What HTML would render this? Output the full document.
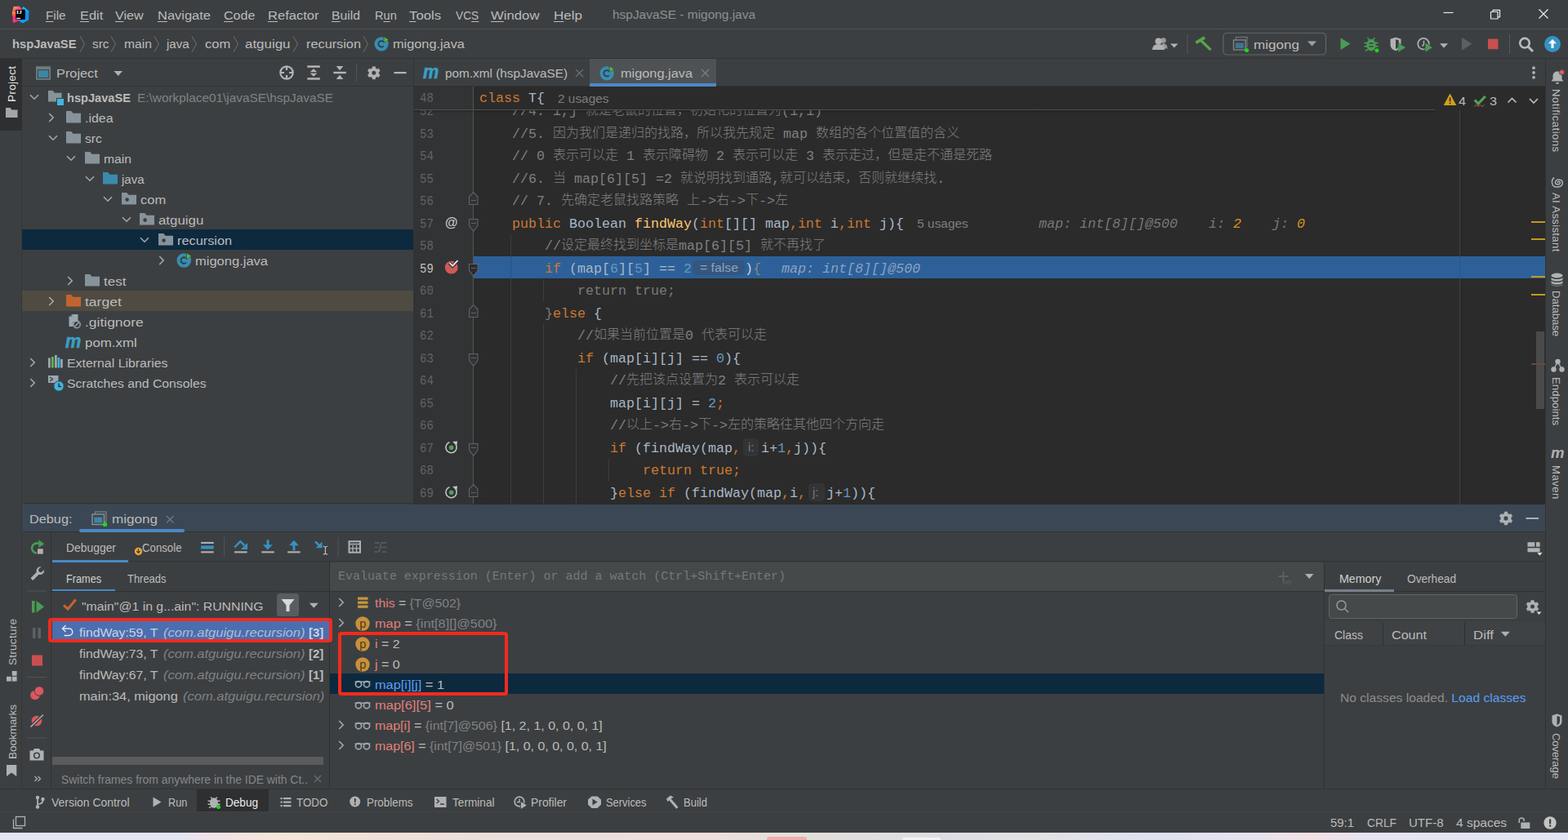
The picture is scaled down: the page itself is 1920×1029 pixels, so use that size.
<!DOCTYPE html>
<html lang="zh"><head><meta charset="utf-8"><title>hspJavaSE - migong.java</title>
<style>
html,body{margin:0;padding:0;}
body{width:1920px;height:1029px;overflow:hidden;background:#3c3f41;position:relative;font-family:"Liberation Sans", "Noto Sans CJK SC", sans-serif;color:#bbbbbb;}
#root{position:absolute;left:0;top:0;width:1920px;height:1029px;overflow:hidden;}
#root div,#root svg,#root span.t{position:absolute;}
span.t{white-space:pre;line-height:24px;transform-origin:0 50%;font-size:15.2px;}
.s{font-family:"Liberation Sans", "Noto Sans CJK SC", sans-serif;}
.r{font-family:"Liberation Serif",serif;}
span.t.m{font-family:"Liberation Mono", "Noto Sans CJK SC", monospace;font-size:16.67px;}
span.t .c{font-size:16px;font-weight:300;position:relative;top:-1px;}
.d{color:#7a7a7a;}.b1{color:#7a7a7a;}.k{color:#cc7832;}.n{color:#6897bb;}.g{color:#808080;}.f{color:#ffc66d;}
u{text-decoration-thickness:1px;text-underline-offset:1.5px;}
</style></head>
<body><div id="root">
<div style="left:0px;top:0px;width:1920px;height:1029px;background:#3c3f41;"></div>
<div style="left:0px;top:35px;width:1920px;height:1px;background:#4f5153;"></div>
<div style="left:0px;top:71px;width:1920px;height:1px;background:#323232;"></div>
<div style="left:0px;top:72px;width:27px;height:895px;background:#3c3f41;"></div>
<div style="left:0px;top:72px;width:27px;height:88px;background:#2d2f30;"></div>
<div style="left:26px;top:160px;width:1px;height:807px;background:#35383a;"></div>
<div style="left:27px;top:105px;width:480px;height:1px;background:#323232;"></div>
<div style="left:506px;top:72px;width:1px;height:34px;background:#323232;"></div>
<div style="left:507px;top:72px;width:1385px;height:34px;background:#3c3f41;"></div>
<div style="left:722px;top:72px;width:155px;height:34px;background:#4e5254;"></div>
<div style="left:722px;top:102px;width:155px;height:4px;background:#4a88c7;"></div>
<div style="left:507px;top:105px;width:1385px;height:1px;background:#323232;"></div>
<div style="left:507px;top:106px;width:1385px;height:512px;background:#2b2b2b;"></div>
<div style="left:506px;top:106px;width:73px;height:512px;background:#313335;"></div>
<div style="left:579px;top:106px;width:1px;height:511px;background:#555555;"></div>
<div style="left:1892px;top:72px;width:28px;height:895px;background:#3c3f41;"></div>
<div style="left:1892px;top:72px;width:1px;height:895px;background:#323232;"></div>
<div style="left:27px;top:617.5px;width:1865px;height:34px;background:#3b4754;"></div>
<div style="left:28px;top:616px;width:479px;height:1px;background:#323232;"></div>
<div style="left:28px;top:651px;width:1864px;height:1px;background:#323232;"></div>
<div style="left:0px;top:966px;width:1920px;height:1px;background:#323232;"></div>
<div style="left:0px;top:1019.6px;width:1920px;height:9.4px;background:linear-gradient(90deg,#e4e6f4 0%,#e4e6f4 11.5%,#f2e1e8 13.5%,#f6e5da 17%,#f1e2d9 22%,#e9deda 33%,#eddfdd 45%,#e2dfdb 52%,#dddde4 60%,#e3e2e3 66%,#dfe2ef 73%,#e6e3ee 80%,#f5e1e4 83.5%,#e6e4f0 87%,#e2e5f3 100%);"></div>
<div style="left:939px;top:1025px;width:49px;height:6px;background:#efb0ae;border-radius:5px;"></div>
<div style="left:1105px;top:1026px;width:47px;height:6px;background:#f4f4f6;border-radius:5px;"></div>
<svg style="left:14px;top:7px;" width="23" height="22" viewBox="0 0 23 22">
<defs>
<linearGradient id="lg1" x1="0" y1="0" x2="1" y2="1"><stop offset="0" stop-color="#ffc533"/><stop offset=".45" stop-color="#ff4f8a"/><stop offset="1" stop-color="#ff1f74"/></linearGradient>
<linearGradient id="lg2" x1="0" y1="0" x2="0" y2="1"><stop offset="0" stop-color="#00d4ff"/><stop offset=".4" stop-color="#1590ff"/><stop offset="1" stop-color="#00a8ff"/></linearGradient>
<linearGradient id="lg3" x1="0" y1="0" x2="0" y2="1"><stop offset="0" stop-color="#f0c020"/><stop offset=".5" stop-color="#ff6a1a"/><stop offset="1" stop-color="#ff3a7a"/></linearGradient>
</defs>
<polygon points="2.800,1 10,0.800 13.500,5.500 6,6 1,9.500 0.800,8" fill="url(#lg1)"/>
<polygon points="0.800,8.500 6,7 6,14 1,12.500" fill="url(#lg3)"/>
<polygon points="1.500,12 6,13 11,17.500 2,21.200" fill="#ff3287"/>
<polygon points="12.800,3.800 14.500,1 21.500,6.500 21,17.500 13.500,21.500 8.500,18 17,16.500 17,5" fill="url(#lg2)"/>
<rect x="5.200" y="5.100" width="11.700" height="11.700" fill="#0a0508"/>
<rect x="6.200" y="14.900" width="4.800" height="1.200" fill="#f4f4f4"/>
</svg>
<span class="t r" style="left:20.3px;top:11.4px;font-size:6.6px;line-height:8px;color:#ffffff;font-weight:bold;transform:scaleX(1.1234);">IJ</span>
<span class="t s" style="left:56.2px;top:6.7px;transform:scaleX(1.0047);"><u>F</u>ile</span>
<span class="t s" style="left:97.5px;top:6.7px;transform:scaleX(1.0807);"><u>E</u>dit</span>
<span class="t s" style="left:141.2px;top:6.7px;transform:scaleX(1.0595);"><u>V</u>iew</span>
<span class="t s" style="left:192.5px;top:6.7px;transform:scaleX(1.0842);"><u>N</u>avigate</span>
<span class="t s" style="left:274.2px;top:6.7px;transform:scaleX(1.0547);"><u>C</u>ode</span>
<span class="t s" style="left:327.5px;top:6.7px;transform:scaleX(1.0887);"><u>R</u>efactor</span>
<span class="t s" style="left:406.3px;top:6.7px;transform:scaleX(1.0356);"><u>B</u>uild</span>
<span class="t s" style="left:458.7px;top:6.7px;transform:scaleX(0.9614);">R<u>u</u>n</span>
<span class="t s" style="left:501.3px;top:6.7px;transform:scaleX(1.1052);"><u>T</u>ools</span>
<span class="t s" style="left:558px;top:6.7px;transform:scaleX(0.9056);">VC<u>S</u></span>
<span class="t s" style="left:601px;top:6.7px;transform:scaleX(1.1012);"><u>W</u>indow</span>
<span class="t s" style="left:677.5px;top:6.7px;transform:scaleX(1.12);"><u>H</u>elp</span>
<span class="t s" style="left:749.5px;top:6.4px;color:#8d8f90;transform:scaleX(1.0161);">hspJavaSE - migong.java</span>
<svg style="left:1760px;top:5px;" width="150" height="26" viewBox="0 0 150 26">
<path d="M7.5 10.5h12" stroke="#e8e8e8" stroke-width="1.2" fill="none"/>
<path d="M65.5 9.5h8.5v8.5h-8.5z M68 9.5v-2.2h8.5v8.5h-2.5" stroke="#e8e8e8" stroke-width="1.2" fill="none" stroke-linejoin="round"/>
<path d="M124.5 6.5l11 11M135.5 6.5l-11 11" stroke="#e8e8e8" stroke-width="1.3" fill="none"/>
</svg>
<span class="t s" style="left:15.3px;top:42.2px;font-weight:bold;transform:scaleX(0.9684);">hspJavaSE</span>
<span class="t s" style="left:113.3px;top:42.2px;transform:scaleX(1.0123);">src</span>
<span class="t s" style="left:151.7px;top:42.2px;transform:scaleX(1.0267);">main</span>
<span class="t s" style="left:204px;top:42.2px;transform:scaleX(0.9937);">java</span>
<span class="t s" style="left:250.5px;top:42.2px;transform:scaleX(1.087);">com</span>
<span class="t s" style="left:300px;top:42.2px;transform:scaleX(1.1138);">atguigu</span>
<span class="t s" style="left:374.7px;top:42.2px;transform:scaleX(1.0725);">recursion</span>
<span class="t s" style="left:480.8px;top:42.2px;transform:scaleX(1.0732);">migong.java</span>
<svg style="left:0px;top:36px;" width="600" height="36" viewBox="0 36 600 36"><path d="M98 44.5l5.5 9.5l-5.5 9.5" stroke="#6e7173" stroke-width="1" fill="none"/><path d="M136 44.5l5.5 9.5l-5.5 9.5" stroke="#6e7173" stroke-width="1" fill="none"/><path d="M189 44.5l5.5 9.5l-5.5 9.5" stroke="#6e7173" stroke-width="1" fill="none"/><path d="M235 44.5l5.5 9.5l-5.5 9.5" stroke="#6e7173" stroke-width="1" fill="none"/><path d="M286 44.5l5.5 9.5l-5.5 9.5" stroke="#6e7173" stroke-width="1" fill="none"/><path d="M359 44.5l5.5 9.5l-5.5 9.5" stroke="#6e7173" stroke-width="1" fill="none"/><path d="M445 44.5l5.5 9.5l-5.5 9.5" stroke="#6e7173" stroke-width="1" fill="none"/></svg>
<svg style="left:457.5px;top:44.3px;" width="18.6" height="18.6" viewBox="-0.5 -1 18.6 18.6"><circle cx="8.6" cy="8.8" r="8.600" fill="#3a8cb0"/><path d="M11.300 11.300a3.700 3.700 0 1 1 0-5" fill="none" stroke="#27424e" stroke-width="1.800"/><path d="M11.2 -0.8l6.6 4.4-6.600 4.400z" fill="#3c3f41"/><path d="M12 0.300l5.200 3.400-5.200 3.400z" fill="#59b340"/></svg>
<svg style="left:1400px;top:36px;" width="520" height="36" viewBox="0 0 520 36">
<g fill="#afb1b3">
 <circle cx="24.5" cy="13.500" r="3.300" opacity=".8"/><path d="M22.500 17.500c4-1 7 1 7 6h-5z" opacity=".8"/>
 <circle cx="18.500" cy="14.500" r="4"/><path d="M11 25c0-5.500 3.500-6.800 7.500-6.800s7.500 1.300 7.500 6.800z"/>
 <path d="M33 17.500h9.500l-4.750 5z"/>
</g>
<rect x="53.500" y="6" width="1" height="24" fill="#555759"/>
<g fill="#57a64a">
 <rect x="63.500" y="11.200" width="12.500" height="3.800" transform="rotate(-31 69.800 13)"/>
 <rect x="68" y="17.600" width="17" height="3.300" transform="rotate(44 76.500 19.200)"/>
</g>
<rect x="98" y="4.500" width="125.500" height="26.500" rx="4" fill="none" stroke="#626466" stroke-width="1.200"/>
<g>
 <rect x="113.500" y="9.500" width="13.500" height="12" fill="none" stroke="#6f7578" stroke-width="1.200"/>
 <rect x="110.500" y="13" width="14.500" height="12" fill="#3c3f41" stroke="#7d8386" stroke-width="1.400"/>
 <rect x="112.800" y="16.500" width="10" height="6.500" fill="#41758f"/>
 <circle cx="126.500" cy="25.500" r="2.600" fill="#24d324"/>
</g>
<path d="M201 14.500h11l-5.500 6z" fill="#9da0a2"/>
<g transform="translate(0,1.200)">
<path d="M241.500 9.400l12 7.150-12 7.150z" fill="#499c54"/>
<g fill="#499c54">
 <ellipse cx="279" cy="18" rx="5.600" ry="7.200"/>
 <path d="M275 8.500l2.300 2.500h3.400l2.300-2.500 1.100 1-2.500 2.800h-5.200l-2.500-2.800z"/>
 <path d="M270.500 14.500h4v1.700h-4zM283.500 14.500h4v1.700h-4zM270.500 18.800h4v1.700h-4zM283.500 18.800h4v1.700h-4zM271.500 24.300l3.300-1.800.8 1.400-3.300 1.800zM286.500 24.300l-3.300-1.800-.8 1.400 3.300 1.800z"/>
</g>
<rect x="276.300" y="15" width="5.400" height="1.500" fill="#3c3f41"/><rect x="276.300" y="19" width="5.400" height="1.500" fill="#3c3f41"/>
<circle cx="286" cy="24.500" r="2.700" fill="#24d324" stroke="#3c3f41" stroke-width=".6"/>
<path d="M302.500 10.500l6.500-2 6.500 2v7c0 4-3 6.500-6.500 7.500-3.500-1-6.500-3.500-6.500-7.500z" fill="#afb1b3"/>
<path d="M309 11v12c2-1 3.800-3 3.800-5.500v-5.500z" fill="#3c3f41"/>
<path d="M312 15l9.500 6-9.500 6z" fill="#499c54" stroke="#3c3f41" stroke-width=".6"/>
<circle cx="343" cy="16.500" r="6.800" fill="none" stroke="#afb1b3" stroke-width="1.700"/>
<path d="M343.500 12.500v4.500l-2 2.500" fill="none" stroke="#afb1b3" stroke-width="1.500"/>
<path d="M345 15l9.500 6-9.500 6z" fill="#499c54" stroke="#3c3f41" stroke-width=".8"/>
<path d="M363 16h10l-5 5.500z" fill="#afb1b3"/>
<path d="M390 8.500l12.500 8-12.500 8z" fill="#5c5e60"/>
<rect x="422" y="10.500" width="12.500" height="12.500" fill="#c94f4f"/>
</g>
<rect x="448" y="6" width="1" height="24" fill="#555759"/>
<circle cx="467" cy="16.700" r="5.800" fill="none" stroke="#b9bbbd" stroke-width="2.600"/>
<path d="M471 21l6 6" stroke="#b9bbbd" stroke-width="3" fill="none"/>
<circle cx="501" cy="18" r="10" fill="#3592c4"/>
<path d="M501 12l-5 5.200h3.500v5.800h3v-5.800h3.500z" fill="#fff"/>
</svg>
<span class="t s" style="left:1534.5px;top:42.9px;transform:scaleX(1.1242);">migong</span>
<span class="t s" style="left:5.3px;top:124.8px;transform-origin:0 0;font-size:13.6px;line-height:20px;color:#e4e4e4;letter-spacing:0.281px;transform:rotate(-90deg);">Project</span>
<svg style="left:7px;top:132px;" width="15" height="12" viewBox="0 0 15 12"><path d="M0 0h5.500l2 2.500h7v9.500h-14.500z" fill="#a4a6a8"/></svg>
<span class="t s" style="left:5.6px;top:814.7px;transform-origin:0 0;font-size:13.6px;line-height:20px;letter-spacing:0.23px;transform:rotate(-90deg);">Structure</span>
<svg style="left:8px;top:822px;" width="13" height="13" viewBox="0 0 13 13"><rect x="6.800" y="0" width="5.800" height="5.800" fill="#afb1b3"/><rect x="0" y="6.800" width="5.800" height="5.800" fill="#afb1b3"/><rect x="6.800" y="6.800" width="5.800" height="5.800" fill="#afb1b3"/></svg>
<span class="t s" style="left:5.6px;top:930px;transform-origin:0 0;font-size:13.6px;line-height:20px;letter-spacing:-0.125px;transform:rotate(-90deg);">Bookmarks</span>
<svg style="left:8px;top:936.5px;" width="13" height="15" viewBox="0 0 13 15"><path d="M0 0h12.300v14l-6.150-4.500-6.150 4.500z" fill="#afb1b3"/></svg>
<svg style="left:43px;top:80px;" width="20" height="19" viewBox="0 0 20 19"><rect x="1" y="1.200" width="18" height="16.600" fill="#6f7a80"/><rect x="2.800" y="5.200" width="14.400" height="10.800" fill="#3c3f41"/><rect x="3.700" y="6.200" width="12.600" height="8.900" fill="#3e86a0"/></svg>
<span class="t s" style="left:68.7px;top:78.4px;transform:scaleX(1.0744);">Project</span>
<svg style="left:139px;top:86px;" width="12" height="8" viewBox="0 0 12 8"><path d="M0.500 1h10.500l-5.250 6z" fill="#afb1b3"/></svg>
<svg style="left:340px;top:78px;" width="160" height="22" viewBox="0 0 160 22">
<g fill="none" stroke="#b2b4b6" stroke-width="2.200">
 <circle cx="11" cy="11" r="7.700"/>
 <path d="M11 3v5M11 14v5M3 11h5M14 11h5"/>
</g>
<g fill="#b2b4b6">
 <rect x="36.300" y="2.300" width="15.500" height="2.500"/><rect x="36.300" y="17.200" width="15.500" height="2.500"/>
 <path d="M44 6.200l4.300 4.100h-8.600zM44 15.800l4.300-4.100h-8.600z"/>
 <rect x="68.300" y="9.800" width="15.500" height="2.400"/>
 <path d="M76 8.300l4.300-5.200h-8.600zM76 13.700l4.300 5.200h-8.600z"/>
</g>
<rect x="96" y="-1" width="1" height="24" fill="#515355"/>
<path fill-rule="evenodd" fill="#b2b4b6" stroke="#b2b4b6" stroke-width="0.6" stroke-linejoin="round" d="M116.0 5.6L116.2 3.7L119.4 3.7L119.6 5.6L121.8 6.9L123.6 6.1L125.2 8.9L123.6 10.0L123.6 12.6L125.2 13.7L123.6 16.5L121.8 15.7L119.6 17.0L119.4 18.9L116.2 18.9L116.0 17.0L113.8 15.7L112.0 16.5L110.4 13.7L112.0 12.6L112.0 10.0L110.4 8.9L112.0 6.1L113.8 6.9ZM115.0 11.3a2.808 2.808 0 1 0 5.616 0a2.808 2.808 0 1 0 -5.616 0Z"/>
<rect x="142.500" y="10" width="15" height="2.200" fill="#b2b4b6"/>
</svg>
<div style="left:27px;top:281px;width:479px;height:25px;background:#0d293e;"></div>
<div style="left:27px;top:356px;width:479px;height:25px;background:#4f4b41;"></div>
<svg style="left:36px;top:115.0px;" width="12" height="8" viewBox="0 0 12 8"><path d="M1 1.200l5 5 5-5" fill="none" stroke="#a5a7a9" stroke-width="1.600"/></svg>
<svg style="left:59.0px;top:111.3px;" width="16.5" height="13.5" viewBox="0 0 18 14.5"><path d="M0 0h6.200l2.300 2.800h9.500v11.700h-18z" fill="#87939a"/></svg>
<div style="left:69.3px;top:120.1px;width:7.6px;height:8.1px;background:#40b6e0;border:1px solid #3c3f41;box-sizing:content-box;"></div>
<span class="t s" style="left:81.7px;top:107.9px;font-weight:bold;transform:scaleX(0.961);">hspJavaSE</span>
<span class="t s" style="left:168.3px;top:107.9px;color:#808284;transform:scaleX(1.0117);">E:\workplace01\javaSE\hspJavaSE</span>
<svg style="left:59.3px;top:137.5px;" width="8" height="12" viewBox="0 0 8 12"><path d="M1.200 1l5 5-5 5" fill="none" stroke="#a5a7a9" stroke-width="1.600"/></svg>
<svg style="left:81px;top:136.0px;" width="18" height="14.5" viewBox="0 0 18 14.5"><path d="M0 0h6.200l2.300 2.800h9.500v11.700h-18z" fill="#87939a"/></svg>
<span class="t s" style="left:104.2px;top:132.9px;transform:scaleX(1.0505);">.idea</span>
<svg style="left:58.5px;top:165.0px;" width="12" height="8" viewBox="0 0 12 8"><path d="M1 1.200l5 5 5-5" fill="none" stroke="#a5a7a9" stroke-width="1.600"/></svg>
<svg style="left:81px;top:161.0px;" width="18" height="14.5" viewBox="0 0 18 14.5"><path d="M0 0h6.200l2.300 2.800h9.500v11.700h-18z" fill="#87939a"/></svg>
<span class="t s" style="left:104.2px;top:157.9px;transform:scaleX(1.0272);">src</span>
<svg style="left:81px;top:190.0px;" width="12" height="8" viewBox="0 0 12 8"><path d="M1 1.200l5 5 5-5" fill="none" stroke="#a5a7a9" stroke-width="1.600"/></svg>
<svg style="left:103.8px;top:186.0px;" width="18" height="14.5" viewBox="0 0 18 14.5"><path d="M0 0h6.200l2.300 2.800h9.500v11.700h-18z" fill="#87939a"/></svg>
<span class="t s" style="left:126.5px;top:182.9px;transform:scaleX(1.0327);">main</span>
<svg style="left:103.5px;top:215.0px;" width="12" height="8" viewBox="0 0 12 8"><path d="M1 1.200l5 5 5-5" fill="none" stroke="#a5a7a9" stroke-width="1.600"/></svg>
<svg style="left:126.2px;top:211.0px;" width="18" height="14.5" viewBox="0 0 18 14.5"><path d="M0 0h6.200l2.300 2.800h9.500v11.700h-18z" fill="#3a8bab"/></svg>
<span class="t s" style="left:149px;top:207.9px;transform:scaleX(0.9901);">java</span>
<svg style="left:126px;top:240.0px;" width="12" height="8" viewBox="0 0 12 8"><path d="M1 1.200l5 5 5-5" fill="none" stroke="#a5a7a9" stroke-width="1.600"/></svg>
<svg style="left:148.8px;top:236.0px;" width="18" height="14.5" viewBox="0 0 18 14.5"><path d="M0 0h6.200l2.300 2.800h9.500v11.700h-18z" fill="#87939a"/><circle cx="6.6" cy="8.6" r="2.3" fill="#3c3f41"/></svg>
<span class="t s" style="left:171.6px;top:232.9px;transform:scaleX(1.0835);">com</span>
<svg style="left:148.5px;top:265.0px;" width="12" height="8" viewBox="0 0 12 8"><path d="M1 1.200l5 5 5-5" fill="none" stroke="#a5a7a9" stroke-width="1.600"/></svg>
<svg style="left:171.2px;top:261.0px;" width="18" height="14.5" viewBox="0 0 18 14.5"><path d="M0 0h6.200l2.300 2.800h9.500v11.700h-18z" fill="#87939a"/><circle cx="6.6" cy="8.6" r="2.3" fill="#3c3f41"/></svg>
<span class="t s" style="left:194.4px;top:257.9px;transform:scaleX(1.1098);">atguigu</span>
<svg style="left:171px;top:290.0px;" width="12" height="8" viewBox="0 0 12 8"><path d="M1 1.200l5 5 5-5" fill="none" stroke="#a5a7a9" stroke-width="1.600"/></svg>
<svg style="left:193.8px;top:286.0px;" width="18" height="14.5" viewBox="0 0 18 14.5"><path d="M0 0h6.200l2.300 2.800h9.500v11.700h-18z" fill="#87939a"/><circle cx="6.6" cy="8.6" r="2.3" fill="#3c3f41"/></svg>
<span class="t s" style="left:216.5px;top:282.9px;transform:scaleX(1.0741);">recursion</span>
<svg style="left:194.3px;top:312.5px;" width="8" height="12" viewBox="0 0 8 12"><path d="M1.200 1l5 5-5 5" fill="none" stroke="#a5a7a9" stroke-width="1.600"/></svg>
<svg style="left:215.9px;top:309.1px;" width="19" height="19" viewBox="-0.5 -1 18.6 18.6"><circle cx="8.6" cy="8.8" r="8.600" fill="#3a8cb0"/><path d="M11.300 11.300a3.700 3.700 0 1 1 0-5" fill="none" stroke="#27424e" stroke-width="1.800"/><path d="M11.2 -0.8l6.6 4.4-6.600 4.400z" fill="#3c3f41"/><path d="M12 0.300l5.200 3.400-5.200 3.400z" fill="#59b340"/></svg>
<span class="t s" style="left:239px;top:307.9px;transform:scaleX(1.0866);">migong.java</span>
<svg style="left:81.8px;top:337.5px;" width="8" height="12" viewBox="0 0 8 12"><path d="M1.200 1l5 5-5 5" fill="none" stroke="#a5a7a9" stroke-width="1.600"/></svg>
<svg style="left:103.8px;top:336.0px;" width="18" height="14.5" viewBox="0 0 18 14.5"><path d="M0 0h6.200l2.300 2.800h9.500v11.700h-18z" fill="#87939a"/></svg>
<span class="t s" style="left:126.5px;top:332.9px;transform:scaleX(1.1232);">test</span>
<svg style="left:59.3px;top:362.5px;" width="8" height="12" viewBox="0 0 8 12"><path d="M1.200 1l5 5-5 5" fill="none" stroke="#a5a7a9" stroke-width="1.600"/></svg>
<svg style="left:81px;top:361.0px;" width="18" height="14.5" viewBox="0 0 18 14.5"><path d="M0 0h6.200l2.300 2.800h9.500v11.700h-18z" fill="#c2642f"/></svg>
<span class="t s" style="left:104.2px;top:357.9px;transform:scaleX(1.1533);">target</span>
<svg style="left:82px;top:384.5px;" width="18" height="18" viewBox="0 0 18 18"><path d="M2.500 3l4-3h7v9h-11z" fill="#9aa7b0"/><path d="M2.500 3h4v-3z" fill="#3c3f41" opacity=".5"/><rect x="2.500" y="9" width="5" height="6" fill="#9aa7b0"/><circle cx="12" cy="12.500" r="4.200" fill="#3c3f41" stroke="#9aa7b0" stroke-width="1.400"/><path d="M9.500 15l5-5" stroke="#9aa7b0" stroke-width="1.400"/></svg>
<span class="t s" style="left:104.2px;top:382.9px;transform:scaleX(1.1491);">.gitignore</span>
<span class="t s" style="left:80.3px;top:405.5px;font-size:23px;color:#3a9fc4;font-weight:bold;font-style:italic;transform:scaleX(0.9436);-webkit-text-stroke:0.6px #3a9fc4;">m</span>
<span class="t s" style="left:104.2px;top:407.9px;transform:scaleX(1.1117);">pom.xml</span>
<svg style="left:36.3px;top:437.5px;" width="8" height="12" viewBox="0 0 8 12"><path d="M1.200 1l5 5-5 5" fill="none" stroke="#a5a7a9" stroke-width="1.600"/></svg>
<svg style="left:59px;top:435.0px;" width="18" height="17" viewBox="0 0 18 17"><rect x="0" y="3.500" width="2.800" height="12" fill="#9aa7b0"/><rect x="4" y="2" width="2.800" height="13.500" fill="#62b543"/><rect x="8" y="0" width="2.800" height="15.500" fill="#9aa7b0"/><rect x="11.600" y="3" width="2.600" height="12.500" fill="#40b6e0"/><rect x="15" y="5" width="2.800" height="10.500" fill="#9aa7b0"/></svg>
<span class="t s" style="left:81.5px;top:432.9px;transform:scaleX(1.0449);">External Libraries</span>
<svg style="left:36.3px;top:462.5px;" width="8" height="12" viewBox="0 0 8 12"><path d="M1.200 1l5 5-5 5" fill="none" stroke="#a5a7a9" stroke-width="1.600"/></svg>
<svg style="left:59px;top:458.5px;" width="20" height="21" viewBox="0 0 20 21"><path d="M0 1h12.500v9h-12.500z" fill="#9aa7b0"/><path d="M2 3l3.500 2.500-3.500 2.500" stroke="#3c3f41" stroke-width="1.300" fill="none"/><circle cx="13" cy="14" r="6.200" fill="#40b6e0" stroke="#3c3f41" stroke-width="1"/><path d="M13 10.500v4h3" stroke="#2b2b2b" stroke-width="1.400" fill="none"/></svg>
<span class="t s" style="left:81.5px;top:457.9px;transform:scaleX(1.0357);">Scratches and Consoles</span>
<span class="t s" style="left:518.3px;top:75.8px;font-size:23px;color:#3a9fc4;font-weight:bold;font-style:italic;transform:scaleX(0.9436);-webkit-text-stroke:0.6px #3a9fc4;">m</span>
<span class="t s" style="left:544.5px;top:78.4px;transform:scaleX(1.0098);">pom.xml (hspJavaSE)</span>
<svg style="left:704px;top:84px;" width="11" height="11" viewBox="0 0 11 11"><path d="M1 1l9 9M10 1l-9 9" stroke="#6e7072" stroke-width="1.200" fill="none"/></svg>
<svg style="left:733.7px;top:80px;" width="18.6" height="18.6" viewBox="-0.5 -1 18.6 18.6"><circle cx="8.6" cy="8.8" r="8.600" fill="#3a8cb0"/><path d="M11.300 11.300a3.700 3.700 0 1 1 0-5" fill="none" stroke="#27424e" stroke-width="1.800"/><path d="M11.2 -0.8l6.6 4.4-6.600 4.400z" fill="#3c3f41"/><path d="M12 0.300l5.200 3.400-5.200 3.400z" fill="#59b340"/></svg>
<span class="t s" style="left:759.5px;top:78.4px;transform:scaleX(1.0744);">migong.java</span>
<svg style="left:858px;top:84px;" width="11" height="11" viewBox="0 0 11 11"><path d="M1 1l9 9M10 1l-9 9" stroke="#7d7f81" stroke-width="1.200" fill="none"/></svg>
<svg style="left:1874px;top:80px;" width="8" height="18" viewBox="0 0 8 18"><circle cx="4" cy="3.200" r="1.900" fill="#afb1b3"/><circle cx="4" cy="9" r="1.900" fill="#afb1b3"/><circle cx="4" cy="14.800" r="1.900" fill="#afb1b3"/></svg>
<div style="left:580px;top:314px;width:1312px;height:27px;background:#2d6099;"></div>
<div style="left:1787px;top:135px;width:1px;height:483px;background:#424242;"></div>
<div style="left:1787px;top:314.25px;width:1px;height:27.5px;background:#2a5588;"></div>
<div style="left:625px;top:286.75px;width:1px;height:330.25px;background:#3d3d3d;"></div>
<div style="left:625px;top:314.25px;width:1px;height:27.5px;background:#25517f;"></div>
<div style="left:665px;top:341.75px;width:1px;height:27.5px;background:#3d3d3d;"></div>
<div style="left:665px;top:396.75px;width:1px;height:220.25px;background:#3d3d3d;"></div>
<div style="left:705px;top:451.75px;width:1px;height:165.25px;background:#3d3d3d;"></div>
<div style="left:745px;top:561.75px;width:1px;height:27.5px;background:#3d3d3d;"></div>
<div style="left:580px;top:135px;width:1300px;height:20px;overflow:hidden;"><span class="t m" style="left:47px;top:-11.75px;line-height:27.5px;color:#a9b7c6;"><span class="g">//4. i,j <span class="c">就是老鼠的位置，初始化的位置为</span>(1,1)</span></span></div>
<div style="left:507px;top:135px;width:70px;height:20px;overflow:hidden;"><span class="t m" style="left:6.6px;top:-11.75px;line-height:27.5px;color:#606366;transform:scaleX(.84);">52</span></div>
<span class="t m" style="left:627px;top:150.75px;line-height:27.5px;color:#a9b7c6;"><span class="g">//5. <span class="c">因为我们是递归的找路，所以我先规定</span> map <span class="c">数组的各个位置值的含义</span></span></span>
<span class="t m" style="left:513.6px;top:150.75px;line-height:27.5px;color:#606366;transform:scaleX(0.84);">53</span>
<span class="t m" style="left:627px;top:178.25px;line-height:27.5px;color:#a9b7c6;"><span class="g">// 0 <span class="c">表示可以走</span> 1 <span class="c">表示障碍物</span> 2 <span class="c">表示可以走</span> 3 <span class="c">表示走过，但是走不通是死路</span></span></span>
<span class="t m" style="left:513.6px;top:178.25px;line-height:27.5px;color:#606366;transform:scaleX(0.84);">54</span>
<span class="t m" style="left:627px;top:205.75px;line-height:27.5px;color:#a9b7c6;"><span class="g">//6. <span class="c">当</span> map[6][5] =2 <span class="c">就说明找到通路</span>,<span class="c">就可以结束，否则就继续找</span>.</span></span>
<span class="t m" style="left:513.6px;top:205.75px;line-height:27.5px;color:#606366;transform:scaleX(0.84);">55</span>
<span class="t m" style="left:627px;top:233.25px;line-height:27.5px;color:#a9b7c6;"><span class="g">// 7. <span class="c">先确定老鼠找路策略</span> <span class="c">上</span>-&gt;<span class="c">右</span>-&gt;<span class="c">下</span>-&gt;<span class="c">左</span></span></span>
<span class="t m" style="left:513.6px;top:233.25px;line-height:27.5px;color:#606366;transform:scaleX(0.84);">56</span>
<span class="t m" style="left:627px;top:260.75px;line-height:27.5px;color:#a9b7c6;"><span class="k">public </span>Boolean <span class="f">findWay</span>(<span class="k">int</span>[][] map<span class="k">,</span><span class="k">int</span> i<span class="k">,</span><span class="k">int</span> j){</span>
<span class="t m" style="left:513.6px;top:260.75px;line-height:27.5px;color:#606366;transform:scaleX(0.84);">57</span>
<span class="t m" style="left:667px;top:288.25px;line-height:27.5px;color:#a9b7c6;"><span class="g">//<span class="c">设定最终找到坐标是</span>map[6][5] <span class="c">就不再找了</span></span></span>
<span class="t m" style="left:513.6px;top:288.25px;line-height:27.5px;color:#606366;transform:scaleX(0.84);">58</span>
<span class="t m" style="left:667px;top:315.75px;line-height:27.5px;color:#a9b7c6;"><span class="k">if</span> (map[<span class="n">6</span>][<span class="n">5</span>] == <span class="n">2</span></span>
<span class="t m" style="left:513.6px;top:315.75px;line-height:27.5px;color:#c0c0c0;transform:scaleX(0.84);">59</span>
<span class="t m" style="left:707px;top:343.25px;line-height:27.5px;color:#a9b7c6;"><span class="d">return true;</span></span>
<span class="t m" style="left:513.6px;top:343.25px;line-height:27.5px;color:#606366;transform:scaleX(0.84);">60</span>
<span class="t m" style="left:667px;top:370.75px;line-height:27.5px;color:#a9b7c6;"><span class="b1">}</span><span class="k">else</span> {</span>
<span class="t m" style="left:513.6px;top:370.75px;line-height:27.5px;color:#606366;transform:scaleX(0.84);">61</span>
<span class="t m" style="left:707px;top:398.25px;line-height:27.5px;color:#a9b7c6;"><span class="g">//<span class="c">如果当前位置是</span>0 <span class="c">代表可以走</span></span></span>
<span class="t m" style="left:513.6px;top:398.25px;line-height:27.5px;color:#606366;transform:scaleX(0.84);">62</span>
<span class="t m" style="left:707px;top:425.75px;line-height:27.5px;color:#a9b7c6;"><span class="k">if</span> (map[i][j] == <span class="n">0</span>){</span>
<span class="t m" style="left:513.6px;top:425.75px;line-height:27.5px;color:#606366;transform:scaleX(0.84);">63</span>
<span class="t m" style="left:747px;top:453.25px;line-height:27.5px;color:#a9b7c6;"><span class="g">//<span class="c">先把该点设置为</span>2 <span class="c">表示可以走</span></span></span>
<span class="t m" style="left:513.6px;top:453.25px;line-height:27.5px;color:#606366;transform:scaleX(0.84);">64</span>
<span class="t m" style="left:747px;top:480.75px;line-height:27.5px;color:#a9b7c6;">map[i][j] = <span class="n">2</span><span class="k">;</span></span>
<span class="t m" style="left:513.6px;top:480.75px;line-height:27.5px;color:#606366;transform:scaleX(0.84);">65</span>
<span class="t m" style="left:747px;top:508.25px;line-height:27.5px;color:#a9b7c6;"><span class="g">//<span class="c">以上</span>-&gt;<span class="c">右</span>-&gt;<span class="c">下</span>-&gt;<span class="c">左的策略往其他四个方向走</span></span></span>
<span class="t m" style="left:513.6px;top:508.25px;line-height:27.5px;color:#606366;transform:scaleX(0.84);">66</span>
<span class="t m" style="left:747px;top:535.75px;line-height:27.5px;color:#a9b7c6;"><span class="k">if</span> (findWay(map<span class="k">,</span></span>
<span class="t m" style="left:513.6px;top:535.75px;line-height:27.5px;color:#606366;transform:scaleX(0.84);">67</span>
<span class="t m" style="left:787px;top:563.25px;line-height:27.5px;color:#a9b7c6;"><span class="k">return true;</span></span>
<span class="t m" style="left:513.6px;top:563.25px;line-height:27.5px;color:#606366;transform:scaleX(0.84);">68</span>
<span class="t m" style="left:747px;top:590.75px;line-height:27.5px;color:#a9b7c6;">}<span class="k">else if</span> (findWay(map<span class="k">,</span>i<span class="k">,</span></span>
<span class="t m" style="left:513.6px;top:590.75px;line-height:27.5px;color:#606366;transform:scaleX(0.84);">69</span>
<span class="t s" style="left:1123px;top:262.4px;color:#7c7e80;transform:scaleX(1.0139);">5 usages</span>
<span class="t m" style="left:1272px;top:260.75px;line-height:27.5px;color:#787878;font-style:italic;">map: int[8][]@500</span>
<span class="t m" style="left:1480px;top:260.75px;line-height:27.5px;color:#787878;font-style:italic;">i: <span style="color:#d98f1f">2</span></span>
<span class="t m" style="left:1558px;top:260.75px;line-height:27.5px;color:#787878;font-style:italic;">j: <span style="color:#d98f1f">0</span></span>
<div style="left:847.5px;top:318.5px;width:64.5px;height:18.5px;background:#34567f;border-radius:5px;"></div>
<span class="t s" style="left:857px;top:316.4px;color:#8da2bd;transform:scaleX(1.0405);">= false</span>
<span class="t m" style="left:912px;top:315.75px;line-height:27.5px;color:#c8d0d8;">)<span style="color:#8a8a78">{</span></span>
<span class="t m" style="left:957px;top:315.75px;line-height:27.5px;color:#8aa3c2;font-style:italic;">map: int[8][]@500</span>
<div style="left:909.5px;top:536.5px;width:19.5px;height:22px;background:#333435;border-radius:4.5px;"></div>
<span class="t s" style="left:916px;top:536.4px;font-size:14.5px;color:#7c7e80;">i:</span>
<span class="t m" style="left:932px;top:535.75px;line-height:27.5px;color:#a9b7c6;">i+<span class="n">1</span><span class="k">,</span>j)){</span>
<div style="left:989.5px;top:591.5px;width:20px;height:22px;background:#333435;border-radius:4.5px;"></div>
<span class="t s" style="left:995px;top:591.4px;font-size:14.5px;color:#7c7e80;">j:</span>
<span class="t m" style="left:1012px;top:590.75px;line-height:27.5px;color:#a9b7c6;">j+<span class="n">1</span>)){</span>
<div style="left:507px;top:106px;width:1385px;height:28px;background:#2b2b2b;"></div>
<div style="left:507px;top:106px;width:72px;height:28px;background:#313335;"></div>
<div style="left:579px;top:106px;width:1px;height:28px;background:#555555;"></div>
<div style="left:507px;top:134px;width:1250px;height:1px;background:#505050;"></div>
<div style="left:507px;top:135px;width:1250px;height:4px;background:linear-gradient(180deg,rgba(0,0,0,.22),rgba(0,0,0,0));"></div>
<span class="t m" style="left:513.6px;top:107.45px;line-height:27.5px;color:#606366;transform:scaleX(0.84);">48</span>
<span class="t m" style="left:587px;top:107.45px;line-height:27.5px;color:#a9b7c6;"><span class="k">class</span> T{</span>
<span class="t s" style="left:682.7px;top:109.1px;color:#7c7e80;transform:scaleX(1.0139);">2 usages</span>
<div style="left:722px;top:102.3px;width:155px;height:3.6px;background:#4a88c7;"></div>
<svg style="left:1766px;top:112px;" width="122" height="22" viewBox="0 0 122 22">
<path d="M9.500 2.500l7.800 14.500h-15.600z" fill="#d2a11a"/>
<rect x="8.700" y="7.500" width="1.700" height="5" fill="#2b2b2b"/><rect x="8.700" y="13.700" width="1.700" height="1.700" fill="#2b2b2b"/>
<path d="M39.800 10.500l4.300 4.500 8.600-9" fill="none" stroke="#4da457" stroke-width="3.200"/>
<path d="M39 18.500l2.500-2 2.500 2 2.500-2 2.500 2 2.500-2" fill="none" stroke="#c75450" stroke-width="1"/>
<path d="M80.500 13.500l5-5 5 5" fill="none" stroke="#bbbbbb" stroke-width="1.700"/>
<path d="M107 9l5 5 5-5" fill="none" stroke="#bbbbbb" stroke-width="1.700"/>
</svg>
<span class="t s" style="left:1786px;top:111.9px;transform:scaleX(1.0647);">4</span>
<span class="t s" style="left:1823.5px;top:111.9px;transform:scaleX(1.0647);">3</span>
<span class="t s" style="left:544.8px;top:260.8px;font-size:16.8px;color:#c6c6c6;font-weight:bold;transform:scaleX(0.9466);">@</span>
<svg style="left:543px;top:316px;" width="22" height="22" viewBox="0 0 22 22"><circle cx="9.700" cy="11.700" r="7.900" fill="#cf5955"/><path d="M7.200 6.200l4 3.700 6.600-6.800" fill="none" stroke="#313335" stroke-width="4"/><path d="M7.500 6.200l3.700 3.500 6.300-6.500" fill="none" stroke="#e8e8e8" stroke-width="1.800"/></svg>
<svg style="left:543px;top:536.5px;" width="20" height="22" viewBox="0 0 20 22"><path d="M15.200 7.700a6.600 6.600 0 1 1-7.800-2.900" fill="none" stroke="#c3c5c7" stroke-width="1.500"/><path d="M11.100 4.100l6-.6-.9 5.700z" fill="#c3c5c7"/><circle cx="9.700" cy="11.300" r="2.800" fill="#4fa05a"/></svg>
<svg style="left:543px;top:591.5px;" width="20" height="22" viewBox="0 0 20 22"><path d="M15.200 7.700a6.600 6.600 0 1 1-7.800-2.900" fill="none" stroke="#c3c5c7" stroke-width="1.500"/><path d="M11.100 4.100l6-.6-.9 5.700z" fill="#c3c5c7"/><circle cx="9.700" cy="11.300" r="2.800" fill="#4fa05a"/></svg>
<svg style="left:573px;top:234.2px;" width="14" height="18" viewBox="0 0 14 18"><path d="M1.500 16.500h10.500v-9.500l-5.250-5.500-5.250 5.500z" fill="#313335" stroke="#606366" stroke-width="1.100"/><path d="M3.800 11.500h6" stroke="#606366" stroke-width="1"/></svg>
<svg style="left:573px;top:267.0px;" width="14" height="18" viewBox="0 0 14 18"><path d="M1.500 1.500h10.500v8l-5.250 6.500-5.250-6.500z" fill="#313335" stroke="#606366" stroke-width="1.100"/><path d="M3.800 6.500h6" stroke="#606366" stroke-width="1"/></svg>
<svg style="left:573px;top:322.0px;" width="14" height="18" viewBox="0 0 14 18"><path d="M1.500 1.500h10.500v8l-5.250 6.500-5.250-6.500z" fill="#2b2b2b" stroke="#606366" stroke-width="1.100"/><path d="M3.800 6.500h6" stroke="#606366" stroke-width="1"/></svg>
<svg style="left:573px;top:371.7px;" width="14" height="18" viewBox="0 0 14 18"><path d="M1.500 16.500h10.500v-9.500l-5.250-5.500-5.250 5.500z" fill="#313335" stroke="#606366" stroke-width="1.100"/><path d="M3.800 11.500h6" stroke="#606366" stroke-width="1"/></svg>
<svg style="left:573px;top:432.0px;" width="14" height="18" viewBox="0 0 14 18"><path d="M1.500 1.500h10.500v8l-5.250 6.500-5.250-6.500z" fill="#313335" stroke="#606366" stroke-width="1.100"/><path d="M3.800 6.500h6" stroke="#606366" stroke-width="1"/></svg>
<svg style="left:573px;top:542.0px;" width="14" height="18" viewBox="0 0 14 18"><path d="M1.500 1.500h10.500v8l-5.250 6.500-5.250-6.500z" fill="#313335" stroke="#606366" stroke-width="1.100"/><path d="M3.800 6.500h6" stroke="#606366" stroke-width="1"/></svg>
<svg style="left:573px;top:591.7px;" width="14" height="18" viewBox="0 0 14 18"><path d="M1.500 16.500h10.500v-9.500l-5.250-5.500-5.250 5.500z" fill="#313335" stroke="#606366" stroke-width="1.100"/><path d="M3.800 11.500h6" stroke="#606366" stroke-width="1"/></svg>
<div style="left:1875px;top:271px;width:17px;height:2px;background:#c29a1e;"></div>
<div style="left:1875px;top:292px;width:17px;height:2px;background:#c29a1e;"></div>
<div style="left:1875px;top:338px;width:17px;height:2px;background:#c29a1e;"></div>
<div style="left:1875px;top:360px;width:17px;height:2px;background:#c29a1e;"></div>
<div style="left:1881px;top:406px;width:10px;height:95px;background:#4a4a4a;"></div>
<div style="left:1875px;top:445px;width:17px;height:2px;background:#6a4a3c;"></div>
<span class="t s" style="left:35.5px;top:624.4px;transform:scaleX(1.0718);">Debug:</span>
<svg style="left:112px;top:625.5px;" width="20" height="20" viewBox="0 0 20 20"><rect x="4.500" y="1" width="13.500" height="12" fill="none" stroke="#7d8386" stroke-width="1.200"/><rect x="1" y="4" width="14.500" height="12.500" fill="#3b4754" stroke="#8a9196" stroke-width="1.400"/><rect x="3.300" y="7.500" width="10" height="7" fill="#3e86a0"/><circle cx="16.500" cy="16.500" r="2.700" fill="#24d324"/></svg>
<span class="t s" style="left:136.5px;top:624.4px;transform:scaleX(1.1242);">migong</span>
<svg style="left:203px;top:631px;" width="11" height="11" viewBox="0 0 11 11"><path d="M1 1l8.500 8.500M9.500 1l-8.500 8.500" stroke="#6e7a86" stroke-width="1.200" fill="none"/></svg>
<div style="left:97px;top:648.4px;width:129px;height:3.2px;background:#4a88c7;border-radius:2px;"></div>
<svg style="left:1832px;top:624px;" width="60" height="22" viewBox="0 0 60 22"><path fill-rule="evenodd" fill="#afb1b3" stroke="#afb1b3" stroke-width="0.6" stroke-linejoin="round" d="M10.1 5.1L10.3 3.0L13.7 3.0L13.9 5.1L16.2 6.4L18.1 5.5L19.8 8.5L18.1 9.6L18.1 12.4L19.8 13.5L18.1 16.5L16.2 15.6L13.9 16.9L13.7 19.0L10.3 19.0L10.1 16.9L7.8 15.6L5.9 16.5L4.2 13.5L5.9 12.4L5.9 9.6L4.2 8.5L5.9 5.5L7.8 6.4ZM9.0 11.0a2.9519999999999995 2.9519999999999995 0 1 0 5.903999999999999 0a2.9519999999999995 2.9519999999999995 0 1 0 -5.903999999999999 0Z"/><rect x="36.500" y="10" width="15.500" height="2" fill="#afb1b3"/></svg>
<div style="left:62px;top:652px;width:1px;height:315px;background:#323232;"></div>
<div style="left:63px;top:687px;width:1829px;height:1px;background:#323232;"></div>
<span class="t s" style="left:80.5px;top:658.9px;font-size:14.5px;transform:scaleX(0.9578);">Debugger</span>
<div style="left:64px;top:686px;width:93px;height:3px;background:#4a88c7;"></div>
<svg style="left:164px;top:670px;" width="11" height="11" viewBox="0 0 11 11"><circle cx="5.500" cy="5.500" r="4.700" fill="#f0a732"/><path d="M5.500 2v5M3.300 5l2.200 2.300 2.200-2.300" stroke="#3c3f41" stroke-width="1.200" fill="none"/></svg>
<span class="t s" style="left:173.8px;top:658.9px;font-size:14.5px;transform:scaleX(0.9116);">Console</span>
<svg style="left:244px;top:656px;" width="240" height="28" viewBox="0 0 240 28">
<rect x="2.100" y="7.900" width="15.600" height="2.100" fill="#afb1b3"/><rect x="2.100" y="12.500" width="15.600" height="4" fill="#3592c4"/><rect x="2.100" y="19.300" width="15.600" height="2.100" fill="#afb1b3"/>
<rect x="30" y="2" width="1" height="24" fill="#515355"/>
<path d="M43.300 14.500l7-7.300 5 5" fill="none" stroke="#3592c4" stroke-width="2.500"/>
<path d="M59 8.900v8.200h-8.200z" fill="#3592c4"/>
<rect x="43" y="19.300" width="15.600" height="2.100" fill="#afb1b3"/>
<rect x="82.600" y="5.200" width="2.900" height="7" fill="#3592c4"/><path d="M77.900 11.300h11.900l-5.950 6.200z" fill="#3592c4"/>
<rect x="76.300" y="19.300" width="15.500" height="2.100" fill="#afb1b3"/>
<rect x="114.500" y="11.500" width="2.900" height="6.800" fill="#3592c4"/><path d="M110 12.300h11.900l-5.950-6.600z" fill="#3592c4"/>
<rect x="108.100" y="19.300" width="15.500" height="2.100" fill="#afb1b3"/>
<path d="M142 7.300l6 6" stroke="#3592c4" stroke-width="2.600"/><path d="M150.500 7.500v7.800h-7.800z" fill="#3592c4"/>
<path d="M151.700 13.300c1.500 0 2.500.3 2.700 1.200.2-.9 1.200-1.200 2.700-1.200M151.700 23c1.500 0 2.500-.3 2.700-1.200.2.900 1.200 1.200 2.700 1.200M154.400 14.500v7.300" stroke="#c8c8c8" stroke-width="1.100" fill="none"/>
<rect x="169.500" y="2" width="1" height="24" fill="#515355"/>
<rect x="183.500" y="7.200" width="13.500" height="13.500" fill="none" stroke="#afb1b3" stroke-width="2"/>
<rect x="183.500" y="9.800" width="13.500" height="1.500" fill="#afb1b3"/>
<path d="M188 12v8M192.500 12v8M184 15.800h13" stroke="#afb1b3" stroke-width="1.300" fill="none"/>
<g stroke="#595c5e" stroke-width="1.700" fill="none"><path d="M214.500 8.800h6M224 8.800h5.500M214.500 14.500h5M223 14.500h6.500M214.500 20h5M224 20h5.500M219 20c4 0 1.500-11 5-11.200"/></g>
</svg>
<svg style="left:1870px;top:663px;" width="20" height="20" viewBox="0 0 20 20"><rect x="0.500" y="1.200" width="8.800" height="5.500" fill="#afb1b3"/><rect x="11" y="1.200" width="4.600" height="5.500" fill="#afb1b3"/><rect x="0.500" y="8.300" width="15.100" height="5" fill="#afb1b3"/><path d="M11.800 13.700h7.200l-3.600 4.300z" fill="#e4e4e4" stroke="#3c3f41" stroke-width=".5"/></svg>
<svg style="left:33px;top:656px;" width="26" height="312" viewBox="0 0 26 312">
<path d="M14.500 10a6 6 0 1 0-2.500 11.500" fill="none" stroke="#499c54" stroke-width="2.700"/>
<path d="M14.300 5.300l7 4.900-7 4.900z" fill="#499c54"/>
<rect x="13" y="16.300" width="6.700" height="6.300" fill="#afb1b3"/>
<g fill="#afb1b3"><path d="M17.500 38.500a5 5 0 0 0-5.800 6.500l-7.200 7.200 2.800 2.800 7.200-7.200a5 5 0 0 0 6.500-5.800l-3.300 3.300-3-.800-.800-3z"/></g>
<rect x="0" y="67.500" width="24" height="1" fill="#515355"/>
<rect x="6" y="80" width="3.500" height="14.500" fill="#499c54"/><path d="M11.500 80l9.500 7.200-9.500 7.200z" fill="#499c54"/>
<rect x="7" y="113" width="3.500" height="13" fill="#5e6062"/><rect x="13.500" y="113" width="3.500" height="13" fill="#5e6062"/>
<rect x="6" y="146.500" width="13" height="13" fill="#c94f4f"/>
<rect x="0" y="173" width="24" height="1" fill="#515355"/>
<circle cx="10" cy="195.500" r="5.800" fill="#db5860"/><circle cx="15" cy="190.500" r="5.800" fill="#db5860" stroke="#3c3f41" stroke-width="1"/>
<circle cx="12" cy="227" r="6.300" fill="#db5860"/><path d="M4.500 234.500l15.500-15" stroke="#3c3f41" stroke-width="4"/><path d="M4.500 234.500l15.500-15" stroke="#afb1b3" stroke-width="1.500"/>
<rect x="0" y="247.500" width="24" height="1" fill="#515355"/>
<path d="M3.500 263.500h4l1.500-2.500h6l1.500 2.500h4v12h-17z" fill="#afb1b3"/><circle cx="12" cy="269.500" r="3.300" fill="none" stroke="#3c3f41" stroke-width="1.600"/>
<path d="M9.500 295l3 3-3 3M13.500 295l3 3-3 3" fill="none" stroke="#afb1b3" stroke-width="1.200"/>
</svg>
<span class="t s" style="left:80.5px;top:696.6px;font-size:14.5px;color:#d0d0d0;transform:scaleX(0.8788);">Frames</span>
<span class="t s" style="left:156.3px;top:696.6px;font-size:14.5px;transform:scaleX(0.8928);">Threads</span>
<div style="left:63px;top:724px;width:340px;height:1px;background:#323232;"></div>
<div style="left:64px;top:721.6px;width:77px;height:2.9px;background:#4a88c7;"></div>
<div style="left:403px;top:688px;width:1px;height:279px;background:#2f3133;"></div>
<svg style="left:76px;top:733px;" width="19" height="15" viewBox="0 0 19 15"><path d="M2 8.300l5.200 4.700 9.500-11.500" fill="none" stroke="#c9612f" stroke-width="3.100"/></svg>
<span class="t s" style="left:100px;top:731.4px;font-size:15.3px;transform:scaleX(1.0327);">"main"@1 in g...ain": RUNNING</span>
<div style="left:338.7px;top:727px;width:27.5px;height:28px;background:#5a5d5f;border-radius:3.500px;"></div>
<svg style="left:343px;top:732px;" width="19" height="19" viewBox="0 0 19 19"><path d="M1.500 2h16l-6 7.500v7.500h-4v-7.500z" fill="#d8d8d8"/></svg>
<svg style="left:378px;top:738px;" width="13" height="8" viewBox="0 0 13 8"><path d="M0.800 0.800h11l-5.500 6z" fill="#afb1b3"/></svg>
<div style="left:64px;top:761px;width:339px;height:26px;background:#4b6eaf;"></div>
<svg style="left:75px;top:765px;" width="16" height="15" viewBox="0 0 16 15"><path d="M5.500 1l-4 4 4 4" fill="none" stroke="#dfe6f2" stroke-width="1.500"/><path d="M1.500 5h8a4.200 4.200 0 0 1 0 8.500h-6" fill="none" stroke="#dfe6f2" stroke-width="1.500"/></svg>
<span class="t s" style="left:96.7px;top:762.6px;font-size:15.3px;color:#c8d2e4;transform:scaleX(1.0317);">findWay:59, T</span>
<span class="t s" style="left:199.5px;top:762.6px;font-size:15.3px;color:#b0bcd4;font-style:italic;transform:scaleX(1.0797);">(com.atguigu.recursion)</span>
<span class="t s" style="left:377.5px;top:762.6px;font-size:15.3px;color:#c8d2e4;font-weight:bold;transform:scaleX(0.9784);">[3]</span>
<span class="t s" style="left:96.7px;top:788.6px;font-size:15.3px;transform:scaleX(1.0317);">findWay:73, T</span>
<span class="t s" style="left:199.5px;top:788.6px;font-size:15.3px;color:#808284;font-style:italic;transform:scaleX(1.0797);">(com.atguigu.recursion)</span>
<span class="t s" style="left:377.5px;top:788.6px;font-size:15.3px;font-weight:bold;transform:scaleX(0.9784);">[2]</span>
<span class="t s" style="left:96.7px;top:814.6px;font-size:15.3px;transform:scaleX(1.0317);">findWay:67, T</span>
<span class="t s" style="left:199.5px;top:814.6px;font-size:15.3px;color:#808284;font-style:italic;transform:scaleX(1.0797);">(com.atguigu.recursion)</span>
<span class="t s" style="left:377.5px;top:814.6px;font-size:15.3px;font-weight:bold;transform:scaleX(0.9784);">[1]</span>
<span class="t s" style="left:96.7px;top:840.6px;font-size:15.3px;transform:scaleX(1.0681);">main:34, migong</span>
<span class="t s" style="left:223.7px;top:840.6px;font-size:15.3px;color:#808284;font-style:italic;transform:scaleX(1.0785);">(com.atguigu.recursion)</span>
<div style="left:64px;top:927px;width:332px;height:10px;background:#595b5d;"></div>
<span class="t s" style="left:74.5px;top:942.6px;font-size:14px;color:#85878a;transform:scaleX(0.9927);">Switch frames from anywhere in the IDE with Ct..</span>
<svg style="left:383.5px;top:949px;" width="10" height="10" viewBox="0 0 10 10"><path d="M1 1l8 8M9 1l-8 8" stroke="#6e7072" stroke-width="1.100" fill="none"/></svg>
<div style="left:404px;top:689px;width:1217px;height:35px;background:#45494a;"></div>
<div style="left:404px;top:724px;width:1217px;height:1px;background:#323232;"></div>
<span class="t m" style="left:413.5px;top:694.1px;font-size:15.2px;color:#787878;transform:scaleX(0.9857);">Evaluate expression (Enter) or add a watch (Ctrl+Shift+Enter)</span>
<svg style="left:1563px;top:695px;" width="50" height="24" viewBox="0 0 50 24"><path d="M8.500 5v12M2.500 11h12" stroke="#5c6062" stroke-width="1.800" fill="none"/><circle cx="10" cy="18.500" r="2" fill="none" stroke="#5c6062" stroke-width="1"/><circle cx="15.500" cy="18.500" r="2" fill="none" stroke="#5c6062" stroke-width="1"/><path d="M35 8h10.500l-5.250 6z" fill="#afb1b3"/></svg>
<div style="left:404px;top:825px;width:1217px;height:25px;background:#0d293e;"></div>
<svg style="left:414.3px;top:732.0px;" width="8" height="12" viewBox="0 0 8 12"><path d="M1.200 1l5 5-5 5" fill="none" stroke="#a5a7a9" stroke-width="1.600"/></svg>
<svg style="left:438px;top:730.5px;" width="13" height="15" viewBox="0 0 13 15"><rect x="0" y="0.500" width="12.500" height="3.300" fill="#c4953f"/><rect x="0" y="5.500" width="12.500" height="3.300" fill="#c4953f"/><rect x="0" y="10.500" width="12.500" height="3.300" fill="#c4953f"/></svg>
<span class="t s" style="left:458.7px;top:727.1px;font-size:15.3px;transform:scaleX(1.0307);"><span style="color:#e0807c">this</span><span style="color:#bbbbbb"> = </span><span style="color:#808284">{T@502}</span></span>
<svg style="left:414.3px;top:757.0px;" width="8" height="12" viewBox="0 0 8 12"><path d="M1.200 1l5 5-5 5" fill="none" stroke="#a5a7a9" stroke-width="1.600"/></svg>
<svg style="left:435px;top:754.5px;" width="18" height="18" viewBox="0 0 18 18"><circle cx="9" cy="9" r="8.700" fill="#c7913b"/></svg>
<span class="t s" style="left:440.2px;top:754.6px;font-size:14.5px;line-height:18px;color:#4a3a1a;">p</span>
<span class="t s" style="left:458.7px;top:752.1px;font-size:15.3px;transform:scaleX(1.0668);"><span style="color:#e0807c">map</span><span style="color:#bbbbbb"> = </span><span style="color:#808284">{int[8][]@500}</span></span>
<svg style="left:435px;top:779.5px;" width="18" height="18" viewBox="0 0 18 18"><circle cx="9" cy="9" r="8.700" fill="#c7913b"/></svg>
<span class="t s" style="left:440.2px;top:779.6px;font-size:14.5px;line-height:18px;color:#4a3a1a;">p</span>
<span class="t s" style="left:458.7px;top:777.1px;font-size:15.3px;transform:scaleX(1.0389);"><span style="color:#e0807c">i</span><span style="color:#bbbbbb"> = 2</span></span>
<svg style="left:435px;top:804.5px;" width="18" height="18" viewBox="0 0 18 18"><circle cx="9" cy="9" r="8.700" fill="#c7913b"/></svg>
<span class="t s" style="left:440.2px;top:804.6px;font-size:14.5px;line-height:18px;color:#4a3a1a;">p</span>
<span class="t s" style="left:458.7px;top:802.1px;font-size:15.3px;transform:scaleX(1.0491);"><span style="color:#e0807c">j</span><span style="color:#bbbbbb"> = 0</span></span>
<svg style="left:434px;top:833px;" width="20" height="10" viewBox="0 0 20 10"><circle cx="5" cy="5.200" r="3.600" fill="none" stroke="#9aa7b0" stroke-width="1.700"/><circle cx="15" cy="5.200" r="3.600" fill="none" stroke="#9aa7b0" stroke-width="1.700"/><path d="M0.500 2.200h19" stroke="#9aa7b0" stroke-width="1.500"/></svg>
<span class="t s" style="left:458.7px;top:826.6px;font-size:15.3px;transform:scaleX(1.069);"><span style="color:#5c9df2">map[i][j]</span><span style="color:#bbbbbb"> = 1</span></span>
<svg style="left:434px;top:858.5px;" width="20" height="10" viewBox="0 0 20 10"><circle cx="5" cy="5.200" r="3.600" fill="none" stroke="#9aa7b0" stroke-width="1.700"/><circle cx="15" cy="5.200" r="3.600" fill="none" stroke="#9aa7b0" stroke-width="1.700"/><path d="M0.500 2.200h19" stroke="#9aa7b0" stroke-width="1.500"/></svg>
<span class="t s" style="left:458.7px;top:852.1px;font-size:15.3px;transform:scaleX(1.0787);"><span style="color:#e0807c">map[6][5]</span><span style="color:#bbbbbb"> = 0</span></span>
<svg style="left:414.3px;top:882.0px;" width="8" height="12" viewBox="0 0 8 12"><path d="M1.200 1l5 5-5 5" fill="none" stroke="#a5a7a9" stroke-width="1.600"/></svg>
<svg style="left:434px;top:883.5px;" width="20" height="10" viewBox="0 0 20 10"><circle cx="5" cy="5.200" r="3.600" fill="none" stroke="#9aa7b0" stroke-width="1.700"/><circle cx="15" cy="5.200" r="3.600" fill="none" stroke="#9aa7b0" stroke-width="1.700"/><path d="M0.500 2.200h19" stroke="#9aa7b0" stroke-width="1.500"/></svg>
<span class="t s" style="left:458.7px;top:877.1px;font-size:15.3px;transform:scaleX(1.0448);"><span style="color:#e0807c">map[i]</span><span style="color:#bbbbbb"> = </span><span style="color:#808284">{int[7]@506} </span><span style="color:#bbbbbb">[1, 2, 1, 0, 0, 0, 1]</span></span>
<svg style="left:414.3px;top:907.0px;" width="8" height="12" viewBox="0 0 8 12"><path d="M1.200 1l5 5-5 5" fill="none" stroke="#a5a7a9" stroke-width="1.600"/></svg>
<svg style="left:434px;top:908.5px;" width="20" height="10" viewBox="0 0 20 10"><circle cx="5" cy="5.200" r="3.600" fill="none" stroke="#9aa7b0" stroke-width="1.700"/><circle cx="15" cy="5.200" r="3.600" fill="none" stroke="#9aa7b0" stroke-width="1.700"/><path d="M0.500 2.200h19" stroke="#9aa7b0" stroke-width="1.500"/></svg>
<span class="t s" style="left:458.7px;top:902.1px;font-size:15.3px;transform:scaleX(1.0436);"><span style="color:#e0807c">map[6]</span><span style="color:#bbbbbb"> = </span><span style="color:#808284">{int[7]@501} </span><span style="color:#bbbbbb">[1, 0, 0, 0, 0, 0, 1]</span></span>
<div style="left:59.2px;top:757px;width:347.8px;height:30px;border:4px solid #f42a1d;border-radius:4px;box-sizing:border-box;"></div>
<div style="left:414.2px;top:773.7px;width:207.8px;height:78.3px;border:4px solid #f42a1d;border-radius:4px;box-sizing:border-box;"></div>
<div style="left:1621px;top:688px;width:1px;height:279px;background:#2f3133;"></div>
<span class="t s" style="left:1639.6px;top:696.6px;font-size:14.5px;color:#d0d0d0;transform:scaleX(0.9814);">Memory</span>
<span class="t s" style="left:1723px;top:696.6px;font-size:14.5px;transform:scaleX(0.9421);">Overhead</span>
<div style="left:1622px;top:724px;width:270px;height:1px;background:#323232;"></div>
<div style="left:1622px;top:722px;width:85px;height:2.5px;background:#7a8088;"></div>
<div style="left:1626.5px;top:728px;width:231.5px;height:29.5px;background:#45494a;border:1px solid #646464;border-radius:4px;box-sizing:border-box;"></div>
<svg style="left:1635px;top:734px;" width="18" height="18" viewBox="0 0 18 18"><circle cx="7.500" cy="7.500" r="5.500" fill="none" stroke="#9b9ea0" stroke-width="1.400"/><path d="M11.500 11.500l4.500 4.500" stroke="#9b9ea0" stroke-width="1.400"/></svg>
<svg style="left:1866px;top:732px;" width="24" height="22" viewBox="0 0 24 22"><path fill-rule="evenodd" fill="#afb1b3" stroke="#afb1b3" stroke-width="0.6" stroke-linejoin="round" d="M8.7 5.3L8.9 3.4L12.1 3.4L12.3 5.3L14.5 6.6L16.3 5.8L17.9 8.6L16.3 9.7L16.3 12.3L17.9 13.4L16.3 16.2L14.5 15.4L12.3 16.7L12.1 18.6L8.9 18.6L8.7 16.7L6.5 15.4L4.7 16.2L3.1 13.4L4.7 12.3L4.7 9.7L3.1 8.6L4.7 5.8L6.5 6.6ZM7.7 11.0a2.808 2.808 0 1 0 5.616 0a2.808 2.808 0 1 0 -5.616 0Z"/><path d="M15.500 17.500h6l-3 3.500z" fill="#d8d8d8"/></svg>
<div style="left:1622px;top:762px;width:270px;height:28px;background:#3f4244;"></div>
<div style="left:1692.5px;top:763px;width:1.6px;height:27px;background:#2d2f31;"></div>
<div style="left:1792.5px;top:763px;width:1.6px;height:27px;background:#2d2f31;"></div>
<div style="left:1622px;top:790px;width:270px;height:1px;background:#35383a;"></div>
<span class="t s" style="left:1633.5px;top:766.4px;transform:scaleX(0.9214);">Class</span>
<span class="t s" style="left:1703.5px;top:766.4px;transform:scaleX(1.0609);">Count</span>
<span class="t s" style="left:1803.5px;top:766.4px;transform:scaleX(1.1103);">Diff</span>
<svg style="left:1837px;top:773px;" width="13" height="8" viewBox="0 0 13 8"><path d="M0.800 0.800h11l-5.500 6z" fill="#afb1b3"/></svg>
<span class="t s" style="left:1641px;top:842.9px;color:#8c8c8c;transform:scaleX(1.0285);">No classes loaded. <span style="color:#589df6">Load classes</span></span>
<div style="left:0px;top:994px;width:1920px;height:1px;background:#424547;"></div>
<div style="left:241px;top:967px;width:88px;height:27px;background:#2d2f30;"></div>
<span class="t s" style="left:63.3px;top:971.2px;font-size:14.5px;transform:scaleX(0.9633);">Version Control</span>
<span class="t s" style="left:206.3px;top:971.2px;font-size:14.5px;transform:scaleX(0.8719);">Run</span>
<span class="t s" style="left:275.5px;top:971.2px;font-size:14.5px;color:#ececec;transform:scaleX(0.936);">Debug</span>
<span class="t s" style="left:363px;top:971.2px;font-size:14.5px;transform:scaleX(0.9201);">TODO</span>
<span class="t s" style="left:448.5px;top:971.2px;font-size:14.5px;transform:scaleX(0.9224);">Problems</span>
<span class="t s" style="left:553.5px;top:971.2px;font-size:14.5px;transform:scaleX(0.9398);">Terminal</span>
<span class="t s" style="left:650px;top:971.2px;font-size:14.5px;transform:scaleX(0.9578);">Profiler</span>
<span class="t s" style="left:741.5px;top:971.2px;font-size:14.5px;transform:scaleX(0.8901);">Services</span>
<span class="t s" style="left:836.5px;top:971.2px;font-size:14.5px;transform:scaleX(0.8992);">Build</span>
<svg style="left:40px;top:972px;" width="840" height="22" viewBox="0 0 840 22">
<g fill="none" stroke="#afb1b3" stroke-width="1.700"><path d="M6 5.500v12M6 13c5 0 6.500-2 6.500-5"/></g>
<circle cx="6" cy="5" r="2.200" fill="#afb1b3"/><circle cx="6" cy="16.500" r="2.200" fill="#afb1b3"/><circle cx="12.500" cy="7" r="2.200" fill="#afb1b3"/>
<path d="M147.500 4.500l10 6-10 6z" fill="#afb1b3"/>
<g fill="#afb1b3"><ellipse cx="222" cy="11.500" rx="5" ry="6.300"/><path d="M218.500 4l2 2h3l2-2 1 1-2.500 2.500h-4l-2.500-2.500z"/><path d="M214.500 8.500h3.500v1.400h-3.500zM226 8.500h3.500v1.400h-3.500zM214.500 12.500h3.500v1.400h-3.500zM226 12.500h3.500v1.400h-3.500zM215.500 17l3-1.500.6 1.200-3 1.500zM228.500 17l-3-1.500-.6 1.200 3 1.500z"/></g>
<circle cx="227.500" cy="16.500" r="2.500" fill="#24d324"/>
<g fill="#afb1b3"><rect x="303.500" y="5" width="2.200" height="2.200"/><rect x="307" y="5" width="9.500" height="2.200"/><rect x="303.500" y="9.500" width="2.200" height="2.200"/><rect x="307" y="9.500" width="9.500" height="2.200"/><rect x="303.500" y="14" width="2.200" height="2.200"/><rect x="307" y="14" width="9.500" height="2.200"/></g>
<circle cx="394.700" cy="10" r="6.500" fill="#afb1b3"/><rect x="393.800" y="6" width="1.900" height="5" fill="#3c3f41"/><rect x="393.800" y="12.200" width="1.900" height="1.900" fill="#3c3f41"/>
<rect x="492" y="4" width="14.500" height="13" fill="#afb1b3"/><path d="M494.500 7l3 2.500-3 2.500M499 13h5" stroke="#3c3f41" stroke-width="1.400" fill="none"/>
<circle cx="596" cy="10" r="5.800" fill="none" stroke="#afb1b3" stroke-width="1.700"/><path d="M596 6.500v4h-3" fill="none" stroke="#afb1b3" stroke-width="1.400"/><path d="M597.500 9.500l8 5-8 5z" fill="#afb1b3" stroke="#3c3f41" stroke-width=".8"/>
<path d="M684.500 3.500h7l4.500 4v6l-4.500 4.500h-7l-4.500-4.500v-6z" fill="#afb1b3"/><path d="M685.500 6.500l6 4-6 4z" fill="#3c3f41"/>
<path d="M776 6.500l5-4 4 2.300-3.500 1.500 9 10.500-2.300 2-9-10.600-1.700 2z" fill="#afb1b3"/>
</svg>
<svg style="left:15px;top:999px;" width="18" height="18" viewBox="0 0 18 18"><rect x="4.500" y="1.500" width="11" height="11" fill="none" stroke="#afb1b3" stroke-width="1.300"/><path d="M1.500 4.500v11h11" fill="none" stroke="#afb1b3" stroke-width="1.300"/></svg>
<span class="t s" style="left:1628.5px;top:996.4px;font-size:14.8px;transform:scaleX(1.0065);">59:1</span>
<span class="t s" style="left:1674px;top:996.4px;font-size:14.8px;transform:scaleX(0.9317);">CRLF</span>
<span class="t s" style="left:1725px;top:996.4px;font-size:14.8px;transform:scaleX(1.0138);">UTF-8</span>
<span class="t s" style="left:1783px;top:996.4px;font-size:14.8px;transform:scaleX(1.0467);">4 spaces</span>
<svg style="left:1857px;top:999px;" width="52" height="18" viewBox="0 0 52 18"><rect x="5.300" y="8.500" width="11" height="7.500" fill="#afb1b3"/><path d="M3.200 9v-3a3 3 0 0 1 6 0v1" fill="none" stroke="#afb1b3" stroke-width="1.600"/><circle cx="41" cy="9" r="7.700" fill="#c4c4c4"/><rect x="40" y="4.500" width="2.200" height="5.800" fill="#3c3f41"/><rect x="40" y="11.500" width="2.200" height="2.200" fill="#3c3f41"/></svg>
<span class="t s" style="left:1914.5px;top:108.8px;transform-origin:0 0;font-size:13.2px;line-height:20px;letter-spacing:0.446px;transform:rotate(90deg);">Notifications</span>
<span class="t s" style="left:1914.5px;top:235.6px;transform-origin:0 0;font-size:13.2px;line-height:20px;letter-spacing:0.309px;transform:rotate(90deg);">AI Assistant</span>
<span class="t s" style="left:1914.5px;top:356.4px;transform-origin:0 0;font-size:13.2px;line-height:20px;letter-spacing:-0.036px;transform:rotate(90deg);">Database</span>
<span class="t s" style="left:1914.5px;top:461.9px;transform-origin:0 0;font-size:13.2px;line-height:20px;letter-spacing:0.055px;transform:rotate(90deg);">Endpoints</span>
<span class="t s" style="left:1914.5px;top:570px;transform-origin:0 0;font-size:13.2px;line-height:20px;letter-spacing:0.427px;transform:rotate(90deg);">Maven</span>
<span class="t s" style="left:1914.5px;top:897.5px;transform-origin:0 0;font-size:13.2px;line-height:20px;letter-spacing:-0.17px;transform:rotate(90deg);">Coverage</span>
<svg style="left:1898px;top:84px;" width="20" height="20" viewBox="0 0 20 20"><path d="M9 3.500c3.500 0 5.500 2.500 5.500 6v3.500l2 2.500h-15l2-2.500v-3.500c0-3.500 2-6 5.500-6z" fill="#afb1b3"/><path d="M7 17h4a2 2 0 0 1-4 0z" fill="#afb1b3"/><circle cx="14.500" cy="4.500" r="3.200" fill="#db5c5c" stroke="#3c3f41" stroke-width=".8"/></svg>
<svg style="left:1898px;top:214px;" width="18" height="18" viewBox="0 0 18 18"><path d="M9.500 9.500c0-1.800 2.800-1.600 2.800.5 0 2.600-5.800 2.800-5.800-.8 0-4.200 8.800-4.400 8.800 1 0 5.600-10.500 6.800-12.500 1.200-.8-2.500-.2-5.500 1.800-7.500" fill="none" stroke="#afb1b3" stroke-width="1.500" stroke-linecap="round"/></svg>
<svg style="left:1899px;top:334px;" width="16" height="17" viewBox="0 0 16 17"><ellipse cx="7.500" cy="3.500" rx="7" ry="3" fill="#afb1b3"/><path d="M0.500 6c2 2.800 12 2.800 14 0v2.500c-2 2.800-12 2.800-14 0zM0.500 10c2 2.800 12 2.800 14 0v2.500c-2 2.800-12 2.800-14 0zM0.500 14c2 2.800 12 2.800 14 0v0.500c-2 2.800-12 2.800-14 0z" fill="#afb1b3"/></svg>
<svg style="left:1899px;top:439px;" width="17" height="18" viewBox="0 0 17 18"><path d="M8.500 4l-5 9.500M8.500 4l5 9.500" stroke="#afb1b3" stroke-width="1.400"/><circle cx="8.500" cy="4" r="3.200" fill="#afb1b3"/><circle cx="3.500" cy="13.500" r="3.200" fill="#afb1b3"/><circle cx="13.500" cy="13.500" r="3.200" fill="#afb1b3"/></svg>
<span class="t s" style="left:1898.5px;top:543.1px;font-size:17.5px;color:#afb1b3;font-weight:bold;font-style:italic;transform:scaleX(1.0602);">m</span>
<svg style="left:1900px;top:874px;" width="14" height="17" viewBox="0 0 14 17"><path d="M0.500 2.500l6-2 6 2v7c0 4-3 6-6 7-3-1-6-3-6-7z" fill="#afb1b3"/><path d="M6.500 3v11.500c2-1 3.500-2.600 3.500-5v-5.500z" fill="#3c3f41"/></svg>
</div></body></html>
